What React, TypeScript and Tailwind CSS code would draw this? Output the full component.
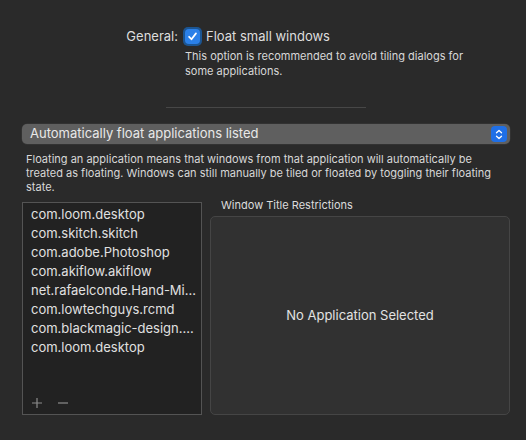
import React from "react";

const apps = [
  "com.loom.desktop",
  "com.skitch.skitch",
  "com.adobe.Photoshop",
  "com.akiflow.akiflow",
  "net.rafaelconde.Hand-Mi...",
  "com.lowtechguys.rcmd",
  "com.blackmagic-design....",
  "com.loom.desktop",
];

export default function App() {
  return (
    <div
      className="w-[526px] h-[440px] bg-[#2a2a2a] text-[#dedede] overflow-hidden flex flex-col pl-[22px] pr-[16px] pt-[27px]"
      style={{ fontFamily: "Inter, 'Liberation Sans', sans-serif" }}
    >
      {/* General row */}
      <div className="flex items-start">
        <div className="w-[156px] text-right text-[13px] leading-[19px]">General:</div>
        <div className="flex flex-col ml-[5px]">
          <div className="flex items-center gap-[4px] h-[19px]">
            <span className="w-[19px] h-[19px] rounded-[5px] bg-[#1c5592] flex items-center justify-center">
              <span className="w-[15px] h-[15px] rounded-[4px] bg-[#2b80e8] flex items-center justify-center">
                <svg width="11" height="11" viewBox="0 0 12 12" fill="none">
                  <path d="M2.3 6.3 L4.9 9 L9.8 2.6" stroke="white" strokeWidth="1.9" strokeLinecap="round" strokeLinejoin="round" />
                </svg>
              </span>
            </span>
            <span className="text-[13px]">Float small windows</span>
          </div>
          <div className="ml-[2px] mt-[3px] text-[11px] leading-[15px] text-[#d8d8d8] w-[300px]">
            This option is recommended to avoid tiling dialogs for
            <br />
            some applications.
          </div>
        </div>
      </div>

      {/* Separator */}
      <div className="ml-[144px] mt-[28px] w-[200px] h-px bg-[#474747]" />

      {/* Dropdown */}
      <div className="mt-[16px] h-[20px] w-[488px] rounded-[5px] bg-[#5f5f5f] flex items-center justify-between pl-[8px] pr-[3px] shadow-[0_0_0_0.5px_#3a3a3a]">
        <span className="text-[13px] text-[#e8e8e8]">Automatically float applications listed</span>
        <span className="w-[16px] h-[16px] rounded-[4px] bg-[#1f6fe6] flex items-center justify-center">
          <svg width="8" height="11" viewBox="0 0 8 11" fill="none">
            <path d="M1.5 3.8 L4 1.5 L6.5 3.8" stroke="white" strokeWidth="1.3" strokeLinecap="round" strokeLinejoin="round" />
            <path d="M1.5 7.2 L4 9.5 L6.5 7.2" stroke="white" strokeWidth="1.3" strokeLinecap="round" strokeLinejoin="round" />
          </svg>
        </span>
      </div>

      {/* Description */}
      <div className="mt-[8px] ml-[4px] text-[11px] leading-[14px] text-[#d8d8d8]">
        Floating an application means that windows from that application will automatically be
        <br />
        treated as floating. Windows can still manually be tiled or floated by toggling their floating
        <br />
        state.
      </div>

      {/* Lists */}
      <div className="mt-[8px] flex gap-[8px]">
        <div className="w-[180px] h-[213px] shrink-0 bg-[#222222] border border-[#545454] flex flex-col">
          <div className="flex flex-col pt-[2px] pl-[8px]">
            {apps.map((a, i) => (
              <div key={i} className="h-[19px] leading-[19px] text-[13px] text-[#e0e0e0] whitespace-nowrap">
                {a}
              </div>
            ))}
          </div>
          <div className="mt-auto mb-[5px] ml-[8px] flex items-center gap-[14px]">
            <svg width="12" height="12" viewBox="0 0 12 12">
              <path d="M6 1 V11 M1 6 H11" stroke="#8c8c8c" strokeWidth="1.2" />
            </svg>
            <svg width="12" height="12" viewBox="0 0 12 12">
              <path d="M1 6 H11" stroke="#8c8c8c" strokeWidth="1.2" />
            </svg>
          </div>
        </div>
        <div className="flex flex-col shrink-0">
          <div className="-mt-[4px] ml-[11px] text-[11px] leading-[14px] text-[#dcdcdc] h-[14px]">Window Title Restrictions</div>
          <div className="mt-[4px] w-[300px] h-[199px] rounded-[5px] bg-[#313131] border border-[#454545] flex items-center justify-center">
            <span className="text-[13px] text-[#e2e2e2]">No Application Selected</span>
          </div>
        </div>
      </div>
    </div>
  );
}
